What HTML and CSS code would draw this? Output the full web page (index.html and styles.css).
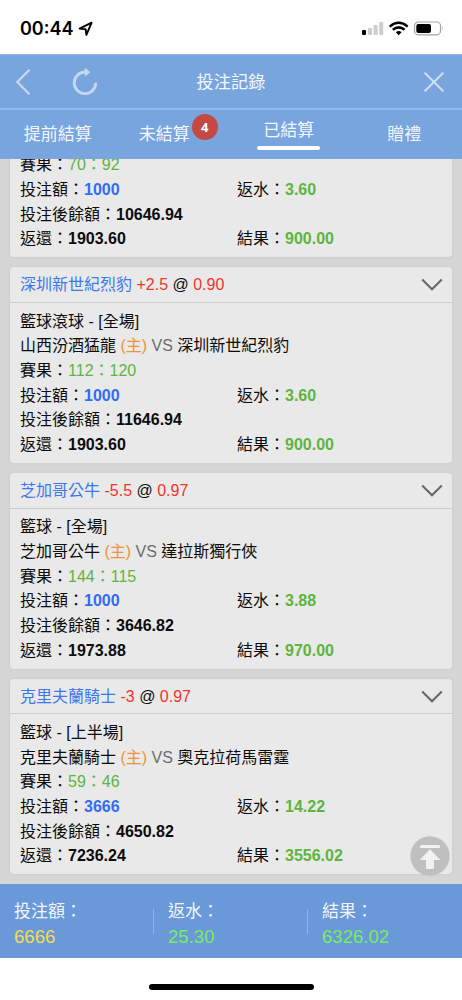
FILE: index.html
```html
<!DOCTYPE html>
<html lang="zh-Hant">
<head>
<meta charset="utf-8">
<meta name="viewport" content="width=device-width, initial-scale=1">
<title>投注記錄</title>
<link rel="stylesheet" href="styles.css">
</head>
<body>
<div class="screen">
  <div class="status">
    <div class="status-left">
      <span class="clock">00:44</span>
      <svg class="location" width="16" height="16" viewBox="0 0 16 16"><path d="M1.600 7.600 13.600 1.700 8.400 13.800 7.600 8.200Z" fill="none" stroke="#000" stroke-width="1.900" stroke-linejoin="round"/></svg>
    </div>
    <svg class="indicators" width="86" height="16" viewBox="0 0 86 16">
      <rect x="1" y="9" width="4" height="5" rx="1" fill="#000"/>
      <rect x="7" y="7" width="4" height="7" rx="1" fill="#ccc"/>
      <rect x="12.600" y="4" width="4" height="10" rx="1" fill="#ccc"/>
      <rect x="18.200" y="1" width="4" height="13" rx="1" fill="#ccc"/>
      <g fill="none" stroke="#000" stroke-width="2.500">
        <path d="M28.700 5.600Q37.700-2 46.700 5.600"/>
        <path d="M31.800 8.800Q37.700 3.900 43.600 8.800"/>
      </g>
      <path d="M34.800 11.200Q37.700 9 40.600 11.200L37.700 14.200Z" fill="#000"/>
      <rect x="53.500" y="1" width="26" height="12.800" rx="3.800" fill="none" stroke="#a3a3a3" stroke-width="1.200"/>
      <rect x="55.300" y="2.900" width="14.700" height="9" rx="2" fill="#000"/>
      <path d="M81.200 5.300q1.700 2.100 0 4.300Z" fill="#a3a3a3"/>
    </svg>
  </div>

  <header class="titlebar">
    <div class="nav">
      <svg width="18" height="28" viewBox="0 0 18 28"><path d="M15.500 1.800 3.300 14 15.500 26.200" fill="none" stroke="#c5d8f2" stroke-width="2.300"/></svg>
      <svg width="28" height="30" viewBox="0 0 28 30"><path d="M24.800 15.800A10.800 10.800 0 1 1 14 5H16" fill="none" stroke="#c5d8f2" stroke-width="2.800"/><path d="M13.800 .600 19.400 5.200 13.800 9.800Z" fill="#c5d8f2"/></svg>
    </div>
    <h1 class="title">投注記錄</h1>
    <svg class="close" width="20" height="20" viewBox="0 0 20 20"><path d="M1.200 1.200 18.800 18.800M18.800 1.200 1.200 18.800" stroke="#d0dff4" stroke-width="2" stroke-linecap="round"/></svg>
  </header>
  <nav class="tabs">
    <div class="tab">提前結算</div>
    <div class="tab"><span class="with-badge">未結算<b class="badge">4</b></span></div>
    <div class="tab"><span class="active">已結算</span></div>
    <div class="tab">贈禮</div>
  </nav>

  <main class="list">
    <article class="card">
      <div class="body">
        <div>賽果：<span class="win">70：92</span></div>
        <div class="pair"><span>投注額：<b class="stake">1000</b></span><span>返水：<b class="win">3.60</b></span></div>
        <div>投注後餘額：<b>10646.94</b></div>
        <div class="pair"><span>返還：<b>1903.60</b></span><span>結果：<b class="win">900.00</b></span></div>
      </div>
    </article>
    <article class="card">
      <div class="head"><div><span class="team">深圳新世紀烈豹</span> <span class="odds">+2.5</span> @ <span class="odds">0.90</span></div><svg width="22" height="14" viewBox="0 0 22 14"><path d="M1.200 1.500 11 11.300 20.800 1.500" fill="none" stroke="#666" stroke-width="2"/></svg></div>
      <div class="body">
        <div>籃球滾球 - [全場]</div>
        <div>山西汾酒猛龍 <span class="home">(主)</span> <span class="vs">VS</span> 深圳新世紀烈豹</div>
        <div>賽果：<span class="win">112：120</span></div>
        <div class="pair"><span>投注額：<b class="stake">1000</b></span><span>返水：<b class="win">3.60</b></span></div>
        <div>投注後餘額：<b>11646.94</b></div>
        <div class="pair"><span>返還：<b>1903.60</b></span><span>結果：<b class="win">900.00</b></span></div>
      </div>
    </article>
    <article class="card">
      <div class="head"><div><span class="team">芝加哥公牛</span> <span class="odds">-5.5</span> @ <span class="odds">0.97</span></div><svg width="22" height="14" viewBox="0 0 22 14"><path d="M1.200 1.500 11 11.300 20.800 1.500" fill="none" stroke="#666" stroke-width="2"/></svg></div>
      <div class="body">
        <div>籃球 - [全場]</div>
        <div>芝加哥公牛 <span class="home">(主)</span> <span class="vs">VS</span> 達拉斯獨行俠</div>
        <div>賽果：<span class="win">144：115</span></div>
        <div class="pair"><span>投注額：<b class="stake">1000</b></span><span>返水：<b class="win">3.88</b></span></div>
        <div>投注後餘額：<b>3646.82</b></div>
        <div class="pair"><span>返還：<b>1973.88</b></span><span>結果：<b class="win">970.00</b></span></div>
      </div>
    </article>
    <article class="card">
      <div class="head"><div><span class="team">克里夫蘭騎士</span> <span class="odds">-3</span> @ <span class="odds">0.97</span></div><svg width="22" height="14" viewBox="0 0 22 14"><path d="M1.200 1.500 11 11.300 20.800 1.500" fill="none" stroke="#666" stroke-width="2"/></svg></div>
      <div class="body">
        <div>籃球 - [上半場]</div>
        <div>克里夫蘭騎士 <span class="home">(主)</span> <span class="vs">VS</span> 奧克拉荷馬雷霆</div>
        <div>賽果：<span class="win">59：46</span></div>
        <div class="pair"><span>投注額：<b class="stake">3666</b></span><span>返水：<b class="win">14.22</b></span></div>
        <div>投注後餘額：<b>4650.82</b></div>
        <div class="pair"><span>返還：<b>7236.24</b></span><span>結果：<b class="win">3556.02</b></span></div>
      </div>
    </article>
    <svg class="to-top" width="40" height="40" viewBox="0 0 40 40"><circle cx="20" cy="20" r="19.700" fill="#bfbfbf"/><rect x="10" y="9" width="20" height="3" rx="1" fill="#f2f2f2"/><path d="M20 13.200 30.300 24H24V32q0 1-1 1H17q-1 0-1-1V24H9.700Z" fill="#f2f2f2"/></svg>
  </main>

  <footer class="totals">
    <div class="total"><span>投注額：</span><span class="sum-stake">6666</span></div>
    <div class="total"><span>返水：</span><span class="sum-win">25.30</span></div>
    <div class="total"><span>結果：</span><span class="sum-win">6326.02</span></div>
  </footer>
  <div class="home-area"><div class="home-bar"></div></div>
</div>
</body>
</html>
```
FILE: styles.css
```css
* { box-sizing: border-box; }
body {
  margin: 0;
  background: #fefefe;
  font-family: "Liberation Sans", "Noto Sans CJK TC", sans-serif;
  font-size: 16px;
  color: #0c0c0c;
}
.screen {
  width: 462px;
  height: 1000px;
  display: flex;
  flex-direction: column;
  overflow: hidden;
}
.status {
  height: 54px;
  flex: none;
  display: flex;
  justify-content: space-between;
  align-items: center;
  padding: 4px 15px 0 20px;
}
.status-left { display: flex; align-items: center; gap: 5px; }
.clock { font: 600 18px/22px Inter, sans-serif; color: #000; }
.titlebar {
  height: 54px;
  flex: none;
  display: grid;
  grid-template-columns: 1fr auto 1fr;
  align-items: center;
  background: #78a5de;
  border-top: 1px solid #8db4e8;
  padding: 0 18px 0 14px;
}
.nav { display: flex; align-items: center; gap: 39px; }
.title {
  margin: 0;
  padding-left: 4px;
  font-size: 17.200px;
  font-weight: 400;
  line-height: 26px;
  color: #f3f7fd;
}
.close { justify-self: end; }
.tabs {
  height: 51px;
  flex: none;
  display: grid;
  grid-template-columns: repeat(4, 1fr);
  background: #78a5de;
  border-top: 2px solid #8fb8ef;
}
.tab {
  display: flex;
  justify-content: center;
  align-items: center;
  font-size: 17px;
  line-height: 26px;
  color: #f3f7fd;
}
.with-badge { position: relative; padding-right: 18px; }
.badge {
  position: absolute;
  right: -10px;
  top: -8px;
  width: 26px;
  height: 26px;
  border-radius: 50%;
  background: #c44844;
  color: #fff;
  font: 700 13px/26px "Open Sans", sans-serif;
  text-align: center;
}
.active {
  display: flex;
  flex-direction: column;
  margin-top: -1px;
  transform: translateY(0);
}
.active::after {
  content: "";
  height: 4px;
  margin: 2px -6px 0;
  border-radius: 2px;
  background: #fff;
}
.list {
  flex: 1;
  min-height: 0;
  position: relative;
  display: flex;
  flex-direction: column;
  justify-content: flex-end;
  gap: 10.200px;
  padding: 0 10px 9.700px;
  background: #d6d6d6;
  overflow: hidden;
}
.card {
  flex: none;
  background: #e9e9e9;
  border-radius: 4px;
  box-shadow: 0 0 3px #c7c7c7;
}
.head {
  height: 35.600px;
  display: flex;
  justify-content: space-between;
  align-items: center;
  border-bottom: 1px solid #cbcbcb;
  padding: 1px 9px 0 10px;
  line-height: 24px;
}
.body { padding: 6.600px 10px 5.400px; line-height: 24.660px; }
.body > div { height: 24.660px; white-space: nowrap; }
.pair { display: grid; grid-template-columns: 217px 1fr; }
.team { color: #3d77f0; }
.odds { color: #f0352b; }
.home { color: #f09236; }
.vs { color: #6c6c6c; }
.win { color: #5db53f; }
.stake { color: #326cf5; }
.to-top { position: absolute; right: 12px; bottom: 8px; }
.totals {
  height: 74px;
  flex: none;
  display: grid;
  grid-template-columns: repeat(3, 1fr);
  align-items: center;
  background: #6999d8;
}
.total {
  display: flex;
  flex-direction: column;
  padding: 6px 0 0 14px;
  font-size: 17px;
  line-height: 25px;
  color: #f1f6fd;
  background: linear-gradient(#8fb3e4, #8fb3e4) right center / 1px 25px no-repeat;
}
.total:last-child { background: none; }
.sum-stake, .sum-win { font-size: 18.600px; }
.sum-stake { color: #f3dc4d; }
.sum-win { color: #79ed61; }
.home-area {
  height: 42px;
  flex: none;
  display: flex;
  justify-content: center;
  padding-top: 26px;
}
.home-bar { width: 165px; height: 6px; border-radius: 3px; background: #000; }
```
